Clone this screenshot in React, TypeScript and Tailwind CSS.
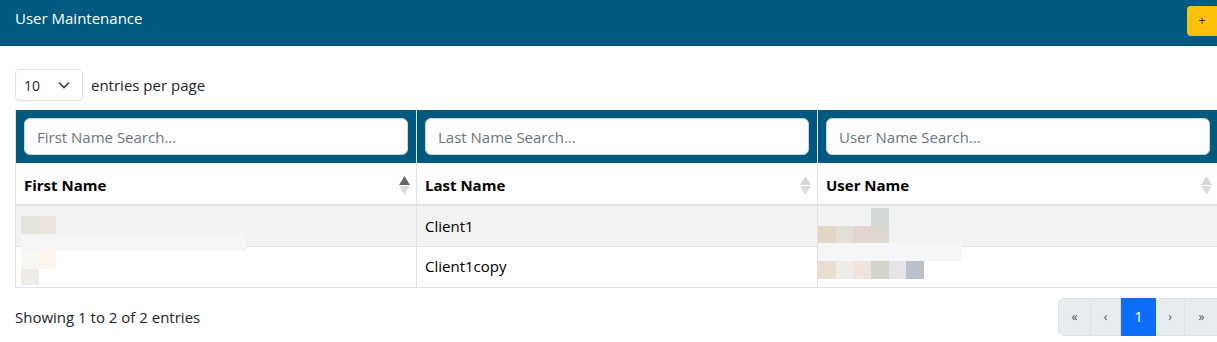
import React from 'react';

const font = { fontFamily: '"Open Sans", "Noto Sans", sans-serif' };

const SortIcon: React.FC<{ active?: boolean }> = ({ active }) => (
  <svg width="11" height="19" viewBox="0 0 11 19" className="shrink-0 -mr-[2px]">
    <polygon points="5.5,0 11,9 0,9" fill={active ? '#666666' : '#d6d6d6'} />
    <polygon points="0,10 11,10 5.5,19" fill="#dcdcdc" />
  </svg>
);

type Block = { x: number; y: number; w: number; h: number; c: string };

// blurred (pixelated) cell content
const Blur: React.FC<{ blocks: Block[] }> = ({ blocks }) => (
  <div className="absolute inset-0 pointer-events-none">
    {blocks.map((b, i) => (
      <div
        key={i}
        className="absolute"
        style={{ left: b.x, top: b.y, width: b.w, height: b.h, background: b.c }}
      />
    ))}
  </div>
);

const rows = [
  {
    last: 'Client1',
    first: [
      { x: 5, y: 10, w: 18, h: 18, c: '#e3e4dc' },
      { x: 23, y: 10, w: 17, h: 18, c: '#ede4dc' },
      { x: 5, y: 28, w: 225, h: 17, c: '#f5f5f5' },
    ],
    user: [
      { x: 53, y: 2, w: 18, h: 18, c: '#d5d9d8' },
      { x: 0, y: 20, w: 18, h: 17, c: '#e2d6c8' },
      { x: 18, y: 20, w: 17, h: 17, c: '#e2dfd6' },
      { x: 35, y: 20, w: 18, h: 17, c: '#e3d7cd' },
      { x: 53, y: 20, w: 18, h: 17, c: '#ddd9d0' },
      { x: 0, y: 37, w: 144, h: 18, c: '#f5f6f8' },
    ],
  },
  {
    last: 'Client1copy',
    first: [
      { x: 5, y: 4, w: 18, h: 18, c: '#f6f8f4' },
      { x: 23, y: 4, w: 17, h: 18, c: '#fcf5ee' },
      { x: 5, y: 22, w: 18, h: 16, c: '#efebe7' },
    ],
    user: [
      { x: 0, y: 14, w: 18, h: 18, c: '#e8dfd2' },
      { x: 18, y: 14, w: 17, h: 18, c: '#efebe6' },
      { x: 35, y: 14, w: 18, h: 18, c: '#efe4da' },
      { x: 53, y: 14, w: 18, h: 18, c: '#d3d4c9' },
      { x: 71, y: 14, w: 17, h: 18, c: '#e7e3e9' },
      { x: 88, y: 14, w: 18, h: 18, c: '#bac1cb' },
    ],
  },
];

export default function App() {
  return (
    <div className="w-[1217px] h-[342px] overflow-hidden bg-white text-[#212529]" style={font}>
      {/* Header */}
      <header className="h-[46px] bg-[#005a80] border-b border-[#004a6a] flex items-start justify-between pl-[15px]">
        <h1 className="text-white text-[15px] leading-[20px] mt-[8px]">User Maintenance</h1>
        <button className="mt-[6px] w-[36px] h-[30px] -mr-[6px] rounded-[4px] bg-[#ffc107] text-[#212529] text-[12px] leading-none flex items-center justify-center pr-[6px]">
          +
        </button>
      </header>

      <div className="pl-[15px]">
        {/* Entries per page */}
        <div className="flex items-center gap-[8px] mt-[23px] h-[32px]">
          <div className="w-[68px] h-[32px] border border-[#dee2e6] rounded-[4px] flex items-center justify-between pl-[8px] pr-[12px] text-[14px]">
            <span>10</span>
            <svg width="12" height="8" viewBox="0 0 12 8">
              <path d="M1 1.5 L6 6.5 L11 1.5" fill="none" stroke="#343a40" strokeWidth="1.6" />
            </svg>
          </div>
          <span className="text-[15px]">entries per page</span>
        </div>

        {/* Table */}
        <table className="table-fixed border-collapse w-[1203px] mt-[9px] text-[15px]">
          <colgroup>
            <col className="w-[401px]" />
            <col className="w-[401px]" />
            <col className="w-[401px]" />
          </colgroup>
          <thead>
            <tr className="bg-[#005a80] h-[53px]">
              {['First Name Search...', 'Last Name Search...', 'User Name Search...'].map((p) => (
                <th key={p} className="px-[8px] border-x border-[#dee2e6] align-middle">
                  <input
                    placeholder={p}
                    className="w-full h-[37px] rounded-[6px] bg-white border border-[#ced4da] px-[12px] text-[15px] font-normal placeholder:text-[#6c757d] outline-none"
                  />
                </th>
              ))}
            </tr>
            <tr className="h-[42px] border-b-2 border-[#dee2e6]">
              {['First Name', 'Last Name', 'User Name'].map((h, i) => (
                <th key={h} className="px-[8px] pt-[3px] border-x border-[#dee2e6] text-left font-bold text-black">
                  <div className="flex items-center justify-between">
                    <span>{h}</span>
                    <SortIcon active={i === 0} />
                  </div>
                </th>
              ))}
            </tr>
          </thead>
          <tbody>
            {rows.map((r, i) => (
              <tr key={r.last} className={`h-[41px] border-b border-[#dee2e6] ${i === 0 ? 'bg-[#f2f2f2]' : 'bg-white'}`}>
                <td className="relative border-x border-[#dee2e6] p-0">
                  <Blur blocks={r.first} />
                </td>
                <td className="border-x border-[#dee2e6] px-[8px] text-black">{r.last}</td>
                <td className="relative border-x border-[#dee2e6] p-0">
                  <Blur blocks={r.user} />
                </td>
              </tr>
            ))}
          </tbody>
        </table>

        {/* Footer */}
        <div className="flex items-center justify-between mt-[10px] h-[38px]">
          <span className="text-[15px] pt-[2px]">Showing 1 to 2 of 2 entries</span>
          <nav className="flex h-[38px] text-[12px] -mr-[2px]">
            <button className="w-[33px] border border-[#dee2e6] bg-[#e9ecef] text-[#495057] rounded-l-[6px]">«</button>
            <button className="w-[30px] border border-l-0 border-[#dee2e6] bg-[#e9ecef] text-[#495057]">‹</button>
            <button className="w-[35px] bg-[#0d6efd] text-white text-[15px]">1</button>
            <button className="w-[29px] border border-l-0 border-[#dee2e6] bg-[#e9ecef] text-[#495057]">›</button>
            <button className="w-[34px] border border-l-0 border-[#dee2e6] bg-[#e9ecef] text-[#495057]">»</button>
          </nav>
        </div>
      </div>
    </div>
  );
}
